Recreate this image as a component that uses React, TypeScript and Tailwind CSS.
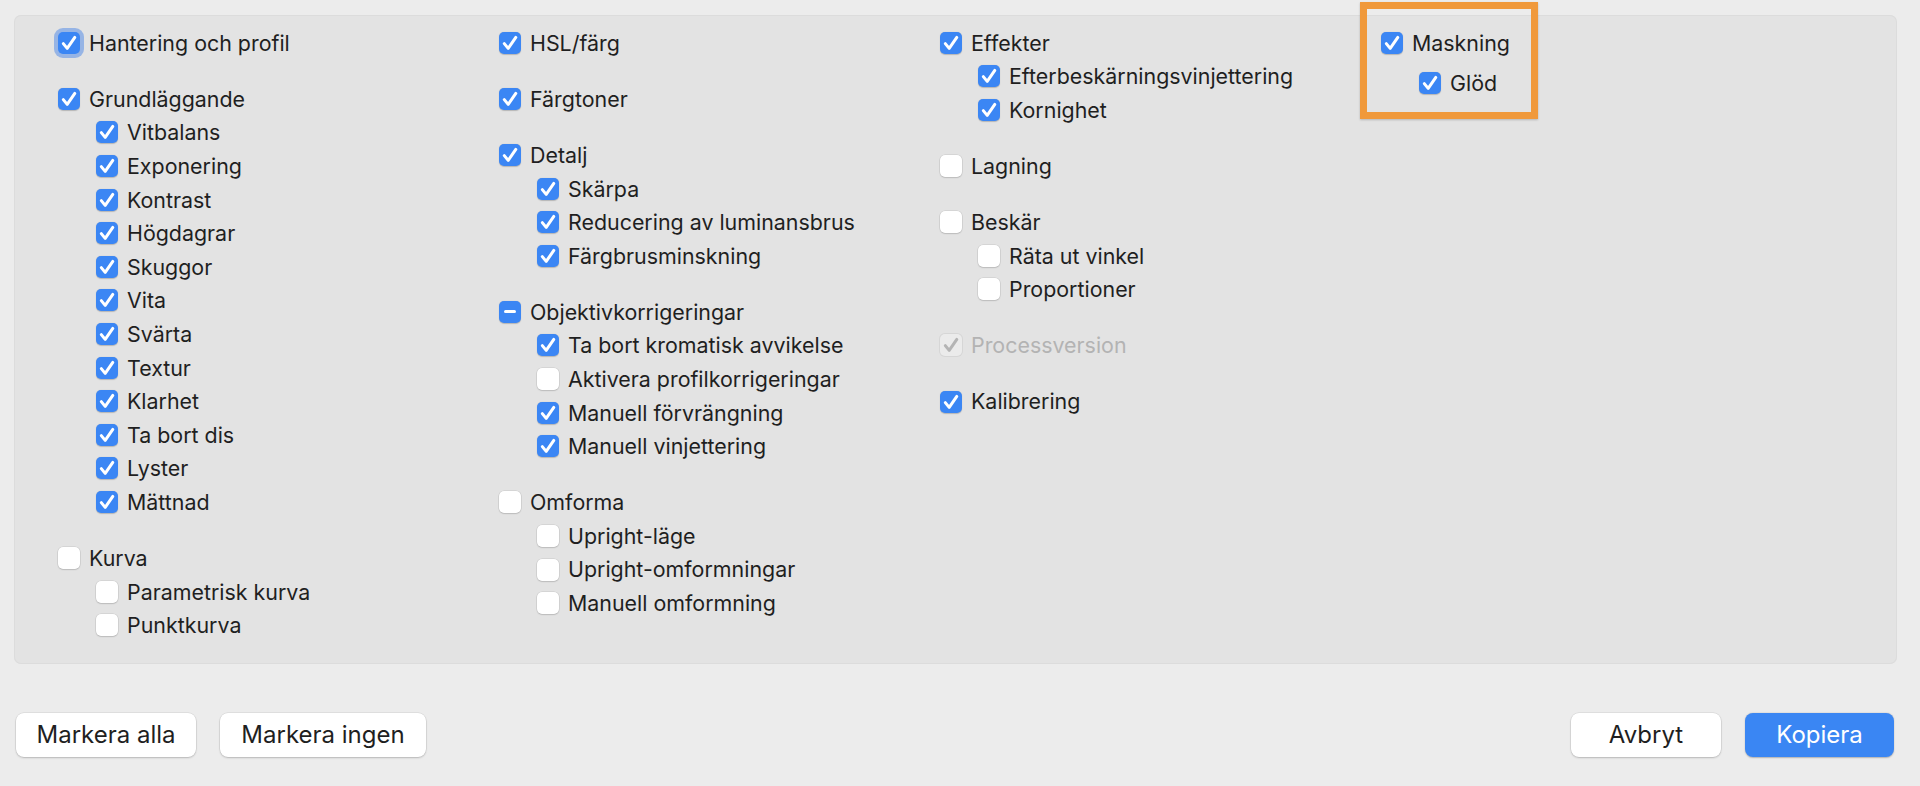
import React from "react"

type State = "on" | "off" | "mixed"

type Item = {
  label: string
  state: State
  sub?: boolean
  disabled?: boolean
  focus?: boolean
  gapTop?: boolean
  tight?: boolean
}

const columns: Item[][] = [
  [
    { label: "Hantering och profil", state: "on", focus: true },
    { label: "Grundläggande", state: "on", gapTop: true },
    { label: "Vitbalans", state: "on", sub: true },
    { label: "Exponering", state: "on", sub: true },
    { label: "Kontrast", state: "on", sub: true },
    { label: "Högdagrar", state: "on", sub: true },
    { label: "Skuggor", state: "on", sub: true },
    { label: "Vita", state: "on", sub: true },
    { label: "Svärta", state: "on", sub: true },
    { label: "Textur", state: "on", sub: true },
    { label: "Klarhet", state: "on", sub: true },
    { label: "Ta bort dis", state: "on", sub: true },
    { label: "Lyster", state: "on", sub: true },
    { label: "Mättnad", state: "on", sub: true },
    { label: "Kurva", state: "off", gapTop: true },
    { label: "Parametrisk kurva", state: "off", sub: true },
    { label: "Punktkurva", state: "off", sub: true },
  ],
  [
    { label: "HSL/färg", state: "on" },
    { label: "Färgtoner", state: "on", gapTop: true },
    { label: "Detalj", state: "on", gapTop: true },
    { label: "Skärpa", state: "on", sub: true },
    { label: "Reducering av luminansbrus", state: "on", sub: true },
    { label: "Färgbrusminskning", state: "on", sub: true },
    { label: "Objektivkorrigeringar", state: "mixed", gapTop: true },
    { label: "Ta bort kromatisk avvikelse", state: "on", sub: true },
    { label: "Aktivera profilkorrigeringar", state: "off", sub: true },
    { label: "Manuell förvrängning", state: "on", sub: true },
    { label: "Manuell vinjettering", state: "on", sub: true },
    { label: "Omforma", state: "off", gapTop: true },
    { label: "Upright-läge", state: "off", sub: true },
    { label: "Upright-omformningar", state: "off", sub: true },
    { label: "Manuell omformning", state: "off", sub: true },
  ],
  [
    { label: "Effekter", state: "on" },
    { label: "Efterbeskärningsvinjettering", state: "on", sub: true },
    { label: "Kornighet", state: "on", sub: true },
    { label: "Lagning", state: "off", gapTop: true },
    { label: "Beskär", state: "off", gapTop: true },
    { label: "Räta ut vinkel", state: "off", sub: true },
    { label: "Proportioner", state: "off", sub: true },
    { label: "Processversion", state: "on", disabled: true, gapTop: true },
    { label: "Kalibrering", state: "on", gapTop: true },
  ],
  [
    { label: "Maskning", state: "on" },
    { label: "Glöd", state: "on", sub: true, tight: true },
  ],
]

function Check({ color }: { color: string }) {
  return (
    <svg width="22" height="22" viewBox="0 0 22 22">
      <path d="M5.3 11.6 L9.2 16.4 L16.8 5.4" fill="none" stroke={color} strokeWidth="3" strokeLinecap="round" strokeLinejoin="round" />
    </svg>
  )
}

function Box({ state, disabled, focus }: { state: State; disabled?: boolean; focus?: boolean }) {
  if (disabled) {
    return (
      <div className="w-[22px] h-[22px] shrink-0 rounded-[5px] bg-[#ebebeb] shadow-[0_0_0_1px_#d6d6d6] flex items-center justify-center">
        <Check color="#b4b4b4" />
      </div>
    )
  }
  if (state === "off") {
    return (
      <div className="w-[22px] h-[22px] shrink-0 rounded-[5px] bg-white shadow-[0_0_0_0.5px_rgba(0,0,0,0.12),0_1px_1.5px_rgba(0,0,0,0.12)]" />
    )
  }
  return (
    <div
      className={
        focus
          ? "w-[22px] h-[22px] shrink-0 rounded-[5px] bg-[#3b86f4] flex items-center justify-center shadow-[0_0_0_4px_rgba(74,134,232,0.5)]"
          : "w-[22px] h-[22px] shrink-0 rounded-[5px] bg-[#3b86f4] flex items-center justify-center shadow-[0_0.5px_1px_rgba(0,0,0,0.2)]"
      }
    >
      {state === "on" ? <Check color="white" /> : <div className="w-[12px] h-[3px] rounded-full bg-white" />}
    </div>
  )
}

function Row({ item }: { item: Item }) {
  let cls = "flex items-center gap-[9px] h-[33.6px]"
  if (item.sub) cls += " ml-[38px]"
  if (item.gapTop) cls += " mt-[22.5px]"
  if (item.tight) cls += " mt-[6.5px]"
  return (
    <div className={cls}>
      <Box state={item.state} disabled={item.disabled} focus={item.focus} />
      <span className={item.disabled ? "text-[#b3b3b3] whitespace-nowrap" : "text-[#1f1f1f] whitespace-nowrap"}>
        {item.label}
      </span>
    </div>
  )
}

function Btn({ label, primary, w }: { label: string; primary?: boolean; w: string }) {
  return (
    <button
      className={
        (primary
          ? "bg-[#3a86f3] text-white shadow-[0_0.5px_1.5px_rgba(0,0,0,0.25)] "
          : "bg-white text-[#1f1f1f] shadow-[0_0_0_0.5px_rgba(0,0,0,0.1),0_1px_2px_rgba(0,0,0,0.18)] ") +
        "h-[44px] rounded-[8px] text-[24px] leading-none flex items-center justify-center " +
        w
      }
    >
      {label}
    </button>
  )
}

export default function App() {
  return (
    <div className="relative w-full min-h-screen bg-[#ececec] font-['Inter','Liberation_Sans',sans-serif] text-[21.4px]">
      <div className="pl-[14px] pr-[23px] pt-[15px]">
        <div className="h-[649px] rounded-[7px] bg-[#e3e3e3] shadow-[inset_0_0_0_1px_#dcdcdc] pl-[44px] pt-[11px] flex">
          {columns.map((col, i) => (
            <div key={i} className="w-[441px] flex flex-col">
              {col.map((it) => (
                <Row key={it.label} item={it} />
              ))}
            </div>
          ))}
        </div>
      </div>

      <div className="flex justify-between pl-[16px] pr-[26px] mt-[49px]">
        <div className="flex gap-[24px]">
          <Btn label="Markera alla" w="w-[180px]" />
          <Btn label="Markera ingen" w="w-[206px]" />
        </div>
        <div className="flex gap-[24px]">
          <Btn label="Avbryt" w="w-[150px]" />
          <Btn label="Kopiera" primary w="w-[149px]" />
        </div>
      </div>

      {/* annotation box around Maskning */}
      <div className="absolute left-[1360px] top-[2px] w-[178px] h-[117px] border-[7px] border-[#f0993b] shadow-[0_1px_2px_rgba(0,0,0,0.2)]" />
    </div>
  )
}
